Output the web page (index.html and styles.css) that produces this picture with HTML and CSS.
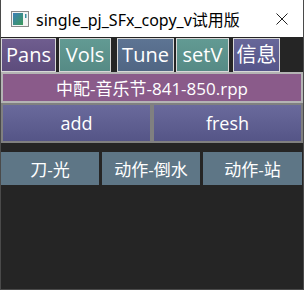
FILE: index.html
```html
<!DOCTYPE html>
<html lang="en">
<head>
    <meta charset="UTF-8">
    <meta name="viewport" content="width=device-width, initial-scale=1.0">
    <title>single_pj_SFx_copy_v试用版</title>
    <link rel="stylesheet" href="styles.css">
</head>
<body>

<div class="window">
    <div class="titlebar">
        <svg class="app-icon" width="18" height="16" viewBox="0 0 18 16">
            <defs>
                <linearGradient id="g" x1="0" y1="0" x2="1" y2="1">
                    <stop offset="0" stop-color="#3b7fb8"/>
                    <stop offset="1" stop-color="#3c9a5a"/>
                </linearGradient>
            </defs>
            <rect x="0.5" y="0.5" width="17" height="15" fill="#f4f4f4" stroke="#8a8a8a"/>
            <rect x="2" y="2" width="10" height="12" fill="url(#g)"/>
            <rect x="14" y="3" width="1.5" height="4" fill="#3a8fa0"/>
        </svg>
        <span class="title-text">single_pj_SFx_copy_v试用版</span>
        <svg class="close" width="12" height="12" viewBox="0 0 12 12">
            <path d="M0.5 0.5 L11.5 11.5 M11.5 0.5 L0.5 11.5" stroke="#222" stroke-width="1"/>
        </svg>
    </div>

    <div class="content">
        <div class="tabs">
            <div class="tab purple w-pans">Pans</div>
            <div class="tab teal w-vols">Vols</div>
            <div class="tab slate w-tune">Tune</div>
            <div class="tab teal w-setv">setV</div>
            <div class="tab indigo w-info">信息</div>
        </div>

        <div class="project">中配-音乐节-841-850.rpp</div>

        <div class="actions">
            <div class="action">add</div>
            <div class="action">fresh</div>
        </div>

        <div class="presets">
            <div class="preset">刀-光</div>
            <div class="preset">动作-倒水</div>
            <div class="preset">动作-站</div>
        </div>
    </div>
</div>

</body>
</html>
```

FILE: styles.css
```css
html, body {
    margin: 0;
    padding: 0;
}
body {
    font-family: "Open Sans", "Noto Sans CJK SC", sans-serif;
    background: #252525;
}
.window {
    width: 304px;
    height: 290px;
    box-sizing: border-box;
    border-left: 1px solid #4a4a4a;
    border-right: 1px solid #4a4a4a;
    border-bottom: 1px solid #4a4a4a;
    background: #252525;
    display: flex;
    flex-direction: column;
}
.titlebar {
    height: 37px;
    background: #fff;
    display: flex;
    align-items: center;
    padding-left: 10px;
    padding-right: 15px;
    color: #000;
    font-family: "Noto Sans", "Noto Sans CJK SC", sans-serif;
    font-size: 16px;
}
.app-icon {
    margin-right: 7px;
}
.title-text {
    flex: 1;
}
.content {
    padding-top: 1px;
}
.tabs {
    display: flex;
    height: 34px;
}
.tab {
    box-sizing: border-box;
    height: 34px;
    border: 1px solid #d8d8d8;
    color: #fff;
    font-size: 20px;
    display: flex;
    align-items: center;
    justify-content: center;
    line-height: 1;
}
.purple { background: linear-gradient(#6f5d8f, #5d4c7c); }
.teal { background: linear-gradient(#629a93, #568a85); }
.slate { background: linear-gradient(#5d7493, #506683); }
.indigo { background: linear-gradient(#676799, #55558a); }
.w-pans { width: 55px; }
.w-vols { width: 52px; margin-left: 3px; }
.w-tune { width: 57px; margin-left: 6px; }
.w-setv { width: 53px; margin-left: 2px; }
.w-info { width: 47px; margin-left: 4px; }

.project {
    box-sizing: border-box;
    height: 31px;
    border: 2px solid #b4b4b4;
    background: #8a5b8a;
    color: #fff;
    font-size: 17px;
    display: flex;
    align-items: center;
    justify-content: center;
}
.actions {
    box-sizing: border-box;
    height: 40px;
    background: #808080;
    padding: 2px;
    display: flex;
    gap: 4px;
}
.action {
    flex: 1;
    background: linear-gradient(#6a6a9c, #555587);
    color: #fff;
    font-size: 18px;
    display: flex;
    align-items: center;
    justify-content: center;
}
.presets {
    margin-top: 9px;
    height: 33px;
    display: grid;
    grid-template-columns: 98px 98px 99px;
    gap: 3px;
}
.preset {
    background: #5e7686;
    color: #fff;
    font-size: 17px;
    display: flex;
    align-items: center;
    justify-content: center;
}
```
